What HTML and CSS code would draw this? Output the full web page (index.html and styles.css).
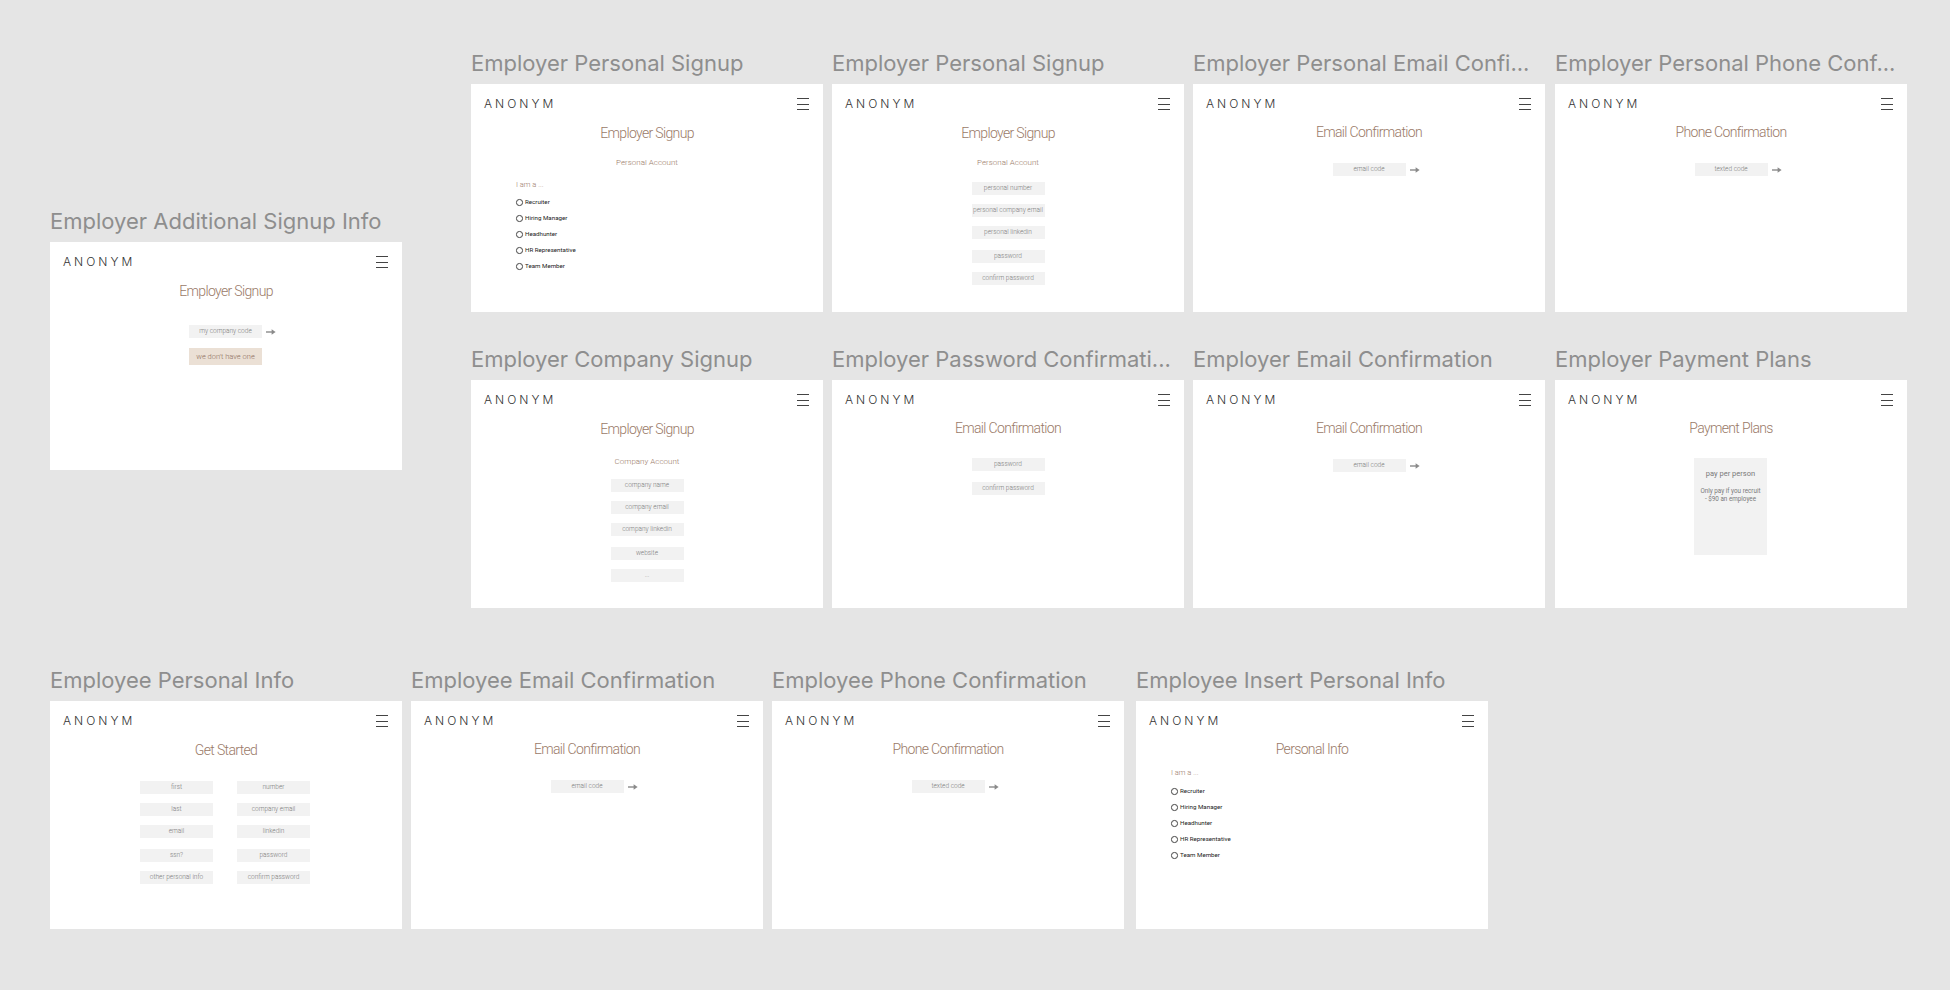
FILE: index.html
```html
<!DOCTYPE html>
<html>
<head>
  <meta charset="utf-8">
  <title>Anonym signup flows</title>
  <link rel="stylesheet" href="styles.css">
</head>
<body>
  <svg class="sprites" width="0" height="0">
    <symbol id="arrow" viewBox="0 0 10 8">
      <path d="M0 4H7" stroke="#8a8a8a" stroke-width="1.4"/>
      <path d="M5.6 1.2 9.6 4 5.6 6.8Z" fill="#8a8a8a"/>
    </symbol>
  </svg>

  <main class="board">

    <section class="artboard at-additional">
      <h3 class="artboard-title">Employer Additional Signup Info</h3>
      <div class="screen">
        <header class="topbar"><span class="logo">ANONYM</span><span class="burger"><i></i><i></i><i></i></span></header>
        <h1 class="heading">Employer Signup</h1>
        <div class="stack code-stack">
          <div class="code-row"><div class="field">my company code</div><svg class="arrow"><use href="#arrow"/></svg></div>
          <button class="alt-button">we don't have one</button>
        </div>
      </div>
    </section>

    <section class="artboard at-personal-a">
      <h3 class="artboard-title">Employer Personal Signup</h3>
      <div class="screen">
        <header class="topbar"><span class="logo">ANONYM</span><span class="burger"><i></i><i></i><i></i></span></header>
        <h1 class="heading">Employer Signup</h1>
        <h2 class="subheading">Personal Account</h2>
        <div class="role-group indent-wide">
          <p class="role-label">I am a ...</p>
          <label class="role"><span class="radio"></span>Recruiter</label>
          <label class="role"><span class="radio"></span>Hiring Manager</label>
          <label class="role"><span class="radio"></span>Headhunter</label>
          <label class="role"><span class="radio"></span>HR Representative</label>
          <label class="role"><span class="radio"></span>Team Member</label>
        </div>
      </div>
    </section>

    <section class="artboard at-personal-b">
      <h3 class="artboard-title">Employer Personal Signup</h3>
      <div class="screen">
        <header class="topbar"><span class="logo">ANONYM</span><span class="burger"><i></i><i></i><i></i></span></header>
        <h1 class="heading">Employer Signup</h1>
        <h2 class="subheading">Personal Account</h2>
        <div class="stack after-sub">
          <div class="field">personal number</div>
          <div class="field">personal company email</div>
          <div class="field">personal linkedin</div>
          <div class="field wide-gap">password</div>
          <div class="field">confirm password</div>
        </div>
      </div>
    </section>

    <section class="artboard at-personal-email">
      <h3 class="artboard-title">Employer Personal Email Confi...</h3>
      <div class="screen">
        <header class="topbar"><span class="logo">ANONYM</span><span class="burger"><i></i><i></i><i></i></span></header>
        <h1 class="heading heading-high">Email Confirmation</h1>
        <div class="stack confirm-stack">
          <div class="code-row"><div class="field">email code</div><svg class="arrow"><use href="#arrow"/></svg></div>
        </div>
      </div>
    </section>

    <section class="artboard at-personal-phone">
      <h3 class="artboard-title">Employer Personal Phone Conf...</h3>
      <div class="screen">
        <header class="topbar"><span class="logo">ANONYM</span><span class="burger"><i></i><i></i><i></i></span></header>
        <h1 class="heading heading-high">Phone Confirmation</h1>
        <div class="stack confirm-stack">
          <div class="code-row"><div class="field">texted code</div><svg class="arrow"><use href="#arrow"/></svg></div>
        </div>
      </div>
    </section>

    <section class="artboard at-company">
      <h3 class="artboard-title">Employer Company Signup</h3>
      <div class="screen">
        <header class="topbar"><span class="logo">ANONYM</span><span class="burger"><i></i><i></i><i></i></span></header>
        <h1 class="heading">Employer Signup</h1>
        <h2 class="subheading subheading-low">Company Account</h2>
        <div class="stack after-sub-low">
          <div class="field">company name</div>
          <div class="field">company email</div>
          <div class="field">company linkedin</div>
          <div class="field wide-gap">website</div>
          <div class="field">...</div>
        </div>
      </div>
    </section>

    <section class="artboard at-password">
      <h3 class="artboard-title">Employer Password Confirmati...</h3>
      <div class="screen">
        <header class="topbar"><span class="logo">ANONYM</span><span class="burger"><i></i><i></i><i></i></span></header>
        <h1 class="heading heading-high">Email Confirmation</h1>
        <div class="stack password-stack">
          <div class="field">password</div>
          <div class="field wide-gap">confirm password</div>
        </div>
      </div>
    </section>

    <section class="artboard at-email">
      <h3 class="artboard-title">Employer Email Confirmation</h3>
      <div class="screen">
        <header class="topbar"><span class="logo">ANONYM</span><span class="burger"><i></i><i></i><i></i></span></header>
        <h1 class="heading heading-high">Email Confirmation</h1>
        <div class="stack confirm-stack">
          <div class="code-row"><div class="field">email code</div><svg class="arrow"><use href="#arrow"/></svg></div>
        </div>
      </div>
    </section>

    <section class="artboard at-payment">
      <h3 class="artboard-title">Employer Payment Plans</h3>
      <div class="screen">
        <header class="topbar"><span class="logo">ANONYM</span><span class="burger"><i></i><i></i><i></i></span></header>
        <h1 class="heading heading-high">Payment Plans</h1>
        <div class="plan-card">
          <p class="plan-name">pay per person</p>
          <p class="plan-text">Only pay if you recruit<br>- $90 an employee</p>
        </div>
      </div>
    </section>

    <section class="artboard at-employee-info">
      <h3 class="artboard-title">Employee Personal Info</h3>
      <div class="screen">
        <header class="topbar"><span class="logo">ANONYM</span><span class="burger"><i></i><i></i><i></i></span></header>
        <h1 class="heading">Get Started</h1>
        <div class="two-col">
          <div class="stack">
            <div class="field">first</div>
            <div class="field">last</div>
            <div class="field">email</div>
            <div class="field wide-gap">ssn?</div>
            <div class="field">other personal info</div>
          </div>
          <div class="stack">
            <div class="field">number</div>
            <div class="field">company email</div>
            <div class="field">linkedin</div>
            <div class="field wide-gap">password</div>
            <div class="field">confirm password</div>
          </div>
        </div>
      </div>
    </section>

    <section class="artboard at-employee-email">
      <h3 class="artboard-title">Employee Email Confirmation</h3>
      <div class="screen">
        <header class="topbar"><span class="logo">ANONYM</span><span class="burger"><i></i><i></i><i></i></span></header>
        <h1 class="heading heading-high">Email Confirmation</h1>
        <div class="stack confirm-stack">
          <div class="code-row"><div class="field">email code</div><svg class="arrow"><use href="#arrow"/></svg></div>
        </div>
      </div>
    </section>

    <section class="artboard at-employee-phone">
      <h3 class="artboard-title">Employee Phone Confirmation</h3>
      <div class="screen">
        <header class="topbar"><span class="logo">ANONYM</span><span class="burger"><i></i><i></i><i></i></span></header>
        <h1 class="heading heading-high">Phone Confirmation</h1>
        <div class="stack confirm-stack">
          <div class="code-row"><div class="field">texted code</div><svg class="arrow"><use href="#arrow"/></svg></div>
        </div>
      </div>
    </section>

    <section class="artboard at-employee-insert">
      <h3 class="artboard-title">Employee Insert Personal Info</h3>
      <div class="screen">
        <header class="topbar"><span class="logo">ANONYM</span><span class="burger"><i></i><i></i><i></i></span></header>
        <h1 class="heading heading-high">Personal Info</h1>
        <div class="role-group indent-narrow">
          <p class="role-label">I am a ...</p>
          <label class="role"><span class="radio"></span>Recruiter</label>
          <label class="role"><span class="radio"></span>Hiring Manager</label>
          <label class="role"><span class="radio"></span>Headhunter</label>
          <label class="role"><span class="radio"></span>HR Representative</label>
          <label class="role"><span class="radio"></span>Team Member</label>
        </div>
      </div>
    </section>

  </main>
</body>
</html>
```

FILE: styles.css
```css
* { box-sizing: border-box; }
html, body { margin: 0; height: 100%; overflow: hidden; }
body { background: #e5e5e5; font-family: "Roboto", "Liberation Sans", sans-serif; }
h1, h2, h3, p { margin: 0; font-weight: normal; }
.sprites { position: absolute; }

/* free canvas, every artboard sits at its own place */
.board { position: relative; width: 1950px; height: 990px; }
.artboard { position: absolute; width: 352px; }
.at-additional { left: 50px; top: 208px; }
.at-personal-a { left: 471px; top: 50px; }
.at-personal-b { left: 832px; top: 50px; }
.at-personal-email { left: 1193px; top: 50px; }
.at-personal-phone { left: 1555px; top: 50px; }
.at-company { left: 471px; top: 346px; }
.at-password { left: 832px; top: 346px; }
.at-email { left: 1193px; top: 346px; }
.at-payment { left: 1555px; top: 346px; }
.at-employee-info { left: 50px; top: 667px; }
.at-employee-email { left: 411px; top: 667px; }
.at-employee-phone { left: 772px; top: 667px; }
.at-employee-insert { left: 1136px; top: 667px; }

.artboard-title {
  height: 34px;
  font-family: "Inter", sans-serif;
  font-size: 22px;
  line-height: 26px;
  color: #8e8e8e;
  white-space: nowrap;
}
.screen { height: 228px; background: #fff; display: flex; flex-direction: column; }

.topbar {
  display: flex;
  justify-content: space-between;
  height: 30px;
  padding: 14px 14px 0 13px;
}
.logo {
  font-family: "Inter", sans-serif;
  font-weight: 300;
  font-size: 12px;
  line-height: 12px;
  letter-spacing: 3px;
  color: #333;
}
.burger { display: flex; flex-direction: column; gap: 4.5px; width: 12px; }
.burger i { display: block; height: 1px; background: #444; }

.heading {
  margin-top: 11px;
  font-weight: 300;
  font-size: 14px;
  line-height: 16px;
  letter-spacing: -0.65px;
  text-align: center;
  color: #9a7a68;
}
.heading-high { margin-top: 10px; }
.subheading {
  margin-top: 17px;
  font-weight: 300;
  font-size: 8px;
  line-height: 10px;
  text-align: center;
  color: #9a7a68;
}
.subheading-low { margin-top: 20px; }

.stack { display: flex; flex-direction: column; align-items: center; gap: 9px; }
.code-stack { margin-top: 26px; margin-right: 1px; gap: 10px; }
.confirm-stack { margin-top: 23px; }
.password-stack { margin-top: 22px; }
.after-sub { margin-top: 14px; }
.after-sub-low { margin-top: 12px; }

.field {
  width: 73px;
  height: 13px;
  background: #f2f2f2;
  font-weight: 300;
  font-size: 6.5px;
  line-height: 12px;
  text-align: center;
  color: #7a7a7a;
  white-space: nowrap;
}
.wide-gap { margin-top: 1.5px; }

.code-row { display: grid; grid-template-columns: 1fr 73px 1fr; width: 100%; align-items: center; }
.code-row .field { grid-column: 2; }
.arrow { width: 10px; height: 8px; margin-left: 4px; }

.alt-button {
  width: 73px;
  height: 17px;
  padding: 0;
  border: none;
  background: #ebe0d5;
  font-family: inherit;
  font-weight: 300;
  font-size: 7.5px;
  color: #8d6f5c;
}

.role-group { display: flex; flex-direction: column; }
.indent-wide { margin: 12px 0 0 45px; }
.indent-narrow { margin: 11px 0 0 35px; }
.role-label { font-weight: 300; font-size: 7.5px; line-height: 10px; color: #9a7a68; margin-bottom: 4px; }
.indent-narrow .role-label { margin-bottom: 5px; }
.role {
  display: flex;
  align-items: center;
  gap: 2.5px;
  height: 16px;
  font-size: 6.2px;
  color: #222;
}
.radio { width: 6.5px; height: 6.5px; border: 1px solid #444; border-radius: 50%; margin-top: 1px; }

.plan-card {
  align-self: center;
  width: 73px;
  height: 97px;
  margin-top: 22px;
  margin-right: 1px;
  padding-top: 11px;
  background: #f2f2f2;
  text-align: center;
  font-weight: 300;
  color: #7a7a7a;
}
.plan-name { font-size: 7.5px; line-height: 10px; }
.plan-text { margin-top: 8px; font-size: 6.3px; line-height: 8px; }

.two-col { display: flex; justify-content: center; gap: 24px; margin-top: 23px; margin-right: 2px; }
```
